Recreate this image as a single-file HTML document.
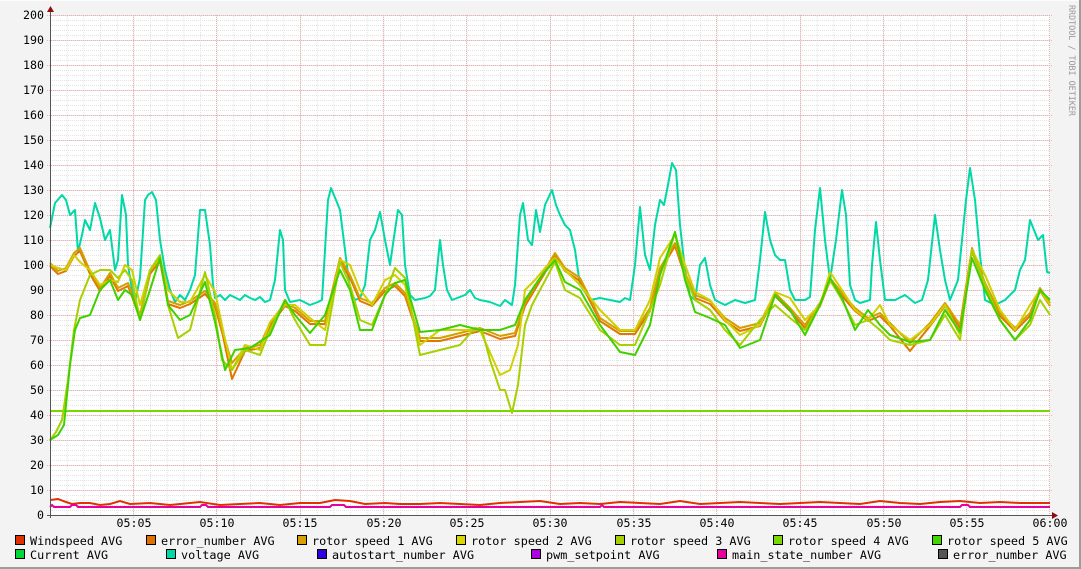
<!DOCTYPE html>
<html><head><meta charset="utf-8"><style>
html,body{margin:0;padding:0;background:#f3f3f3;}
svg{display:block;font-family:"DejaVu Sans Mono","Liberation Mono",monospace;}
</style></head><body>
<svg width="1081" height="569" viewBox="0 0 1081 569" xmlns="http://www.w3.org/2000/svg">
<defs>
<pattern id="mh" x="0" y="15" width="1000" height="5" patternUnits="userSpaceOnUse"><line x1="0" y1="0.5" x2="1000" y2="0.5" stroke="#e2e2e2" stroke-dasharray="1,1"/></pattern>
<pattern id="mv" x="50" y="0" width="16.6667" height="600" patternUnits="userSpaceOnUse"><line x1="0.5" y1="0" x2="0.5" y2="600" stroke="#e2e2e2" stroke-dasharray="1,1"/></pattern>
</defs>
<rect x="0" y="0" width="1081" height="569" fill="#f3f3f3"/>
<line x1="0" y1="0.5" x2="1081" y2="0.5" stroke="#fcfcfc"/>
<line x1="1080" y1="0" x2="1080" y2="569" stroke="#9c9c9c" stroke-width="2"/>
<line x1="0" y1="568" x2="1081" y2="568" stroke="#9c9c9c" stroke-width="2"/>
<rect x="50" y="15" width="1000" height="500" fill="#fff"/>
<rect x="50" y="15" width="1000" height="500" fill="url(#mh)"/>
<rect x="50" y="15" width="1000" height="500" fill="url(#mv)"/>
<g stroke="#eeb0b0" stroke-dasharray="1,1">
<line x1="47" y1="15.5" x2="1053" y2="15.5"/><line x1="47" y1="40.5" x2="1053" y2="40.5"/><line x1="47" y1="65.5" x2="1053" y2="65.5"/><line x1="47" y1="90.5" x2="1053" y2="90.5"/><line x1="47" y1="115.5" x2="1053" y2="115.5"/><line x1="47" y1="140.5" x2="1053" y2="140.5"/><line x1="47" y1="165.5" x2="1053" y2="165.5"/><line x1="47" y1="190.5" x2="1053" y2="190.5"/><line x1="47" y1="215.5" x2="1053" y2="215.5"/><line x1="47" y1="240.5" x2="1053" y2="240.5"/><line x1="47" y1="265.5" x2="1053" y2="265.5"/><line x1="47" y1="290.5" x2="1053" y2="290.5"/><line x1="47" y1="315.5" x2="1053" y2="315.5"/><line x1="47" y1="340.5" x2="1053" y2="340.5"/><line x1="47" y1="365.5" x2="1053" y2="365.5"/><line x1="47" y1="390.5" x2="1053" y2="390.5"/><line x1="47" y1="415.5" x2="1053" y2="415.5"/><line x1="47" y1="440.5" x2="1053" y2="440.5"/><line x1="47" y1="465.5" x2="1053" y2="465.5"/><line x1="47" y1="490.5" x2="1053" y2="490.5"/>
<line x1="133.5" y1="15" x2="133.5" y2="518"/><line x1="216.5" y1="15" x2="216.5" y2="518"/><line x1="300.5" y1="15" x2="300.5" y2="518"/><line x1="383.5" y1="15" x2="383.5" y2="518"/><line x1="466.5" y1="15" x2="466.5" y2="518"/><line x1="550.5" y1="15" x2="550.5" y2="518"/><line x1="633.5" y1="15" x2="633.5" y2="518"/><line x1="716.5" y1="15" x2="716.5" y2="518"/><line x1="800.5" y1="15" x2="800.5" y2="518"/><line x1="883.5" y1="15" x2="883.5" y2="518"/><line x1="966.5" y1="15" x2="966.5" y2="518"/><line x1="1049.5" y1="15" x2="1049.5" y2="518"/>
</g>
<g font-size="11.6" fill="#000" text-anchor="end">
<text x="44" y="19">200</text><text x="44" y="44">190</text><text x="44" y="69">180</text><text x="44" y="94">170</text><text x="44" y="119">160</text><text x="44" y="144">150</text><text x="44" y="169">140</text><text x="44" y="194">130</text><text x="44" y="219">120</text><text x="44" y="244">110</text><text x="44" y="269">100</text><text x="44" y="294">90</text><text x="44" y="319">80</text><text x="44" y="344">70</text><text x="44" y="369">60</text><text x="44" y="394">50</text><text x="44" y="419">40</text><text x="44" y="444">30</text><text x="44" y="469">20</text><text x="44" y="494">10</text><text x="44" y="519">0</text>
</g>
<g font-size="11.6" fill="#000" text-anchor="middle">
<text x="134" y="527">05:05</text><text x="217" y="527">05:10</text><text x="300" y="527">05:15</text><text x="384" y="527">05:20</text><text x="467" y="527">05:25</text><text x="550" y="527">05:30</text><text x="634" y="527">05:35</text><text x="717" y="527">05:40</text><text x="800" y="527">05:45</text><text x="884" y="527">05:50</text><text x="967" y="527">05:55</text><text x="1050" y="527">06:00</text>
</g>
<text transform="translate(1069,5) rotate(90)" font-size="8.4" fill="#999">RRDTOOL / TOBI OETIKER</text>

<line x1="50" y1="411" x2="1050" y2="411" stroke="#77d800" stroke-width="2"/>

<polyline fill="none" stroke="#00d8a8" stroke-width="2" stroke-linejoin="round" points="50,228 55,203 62,195 66,200 70,215 75,210 78,252 82,235 85,220 90,230 95,203 100,218 105,240 110,230 115,270 118,260 122,195 126,215 128,265 132,290 135,302 140,278 145,200 148,195 152,192 156,200 160,240 165,270 170,290 175,302 180,295 185,300 190,290 195,275 200,210 205,210 210,245 213,285 215,298 220,295 225,300 230,295 240,300 245,295 250,298 255,300 260,297 265,302 270,300 275,280 280,230 283,240 285,290 290,302 300,300 310,305 318,302 322,300 328,200 331,188 336,200 340,210 345,250 350,290 355,300 360,298 365,285 370,240 375,230 380,212 385,240 390,265 395,230 398,210 402,215 405,265 410,295 415,300 425,298 430,296 435,290 440,240 443,265 447,290 452,300 465,295 470,290 475,298 480,300 490,302 500,306 505,300 512,305 515,285 520,215 523,203 528,240 532,245 536,210 540,232 545,205 552,190 556,205 560,215 565,225 570,230 575,250 580,285 585,292 590,300 600,298 610,300 620,302 625,298 630,300 635,265 640,207 645,255 650,270 655,225 660,200 664,205 668,185 672,163 676,170 680,225 685,270 690,296 695,300 700,265 705,258 710,285 715,300 725,305 735,300 745,303 755,300 760,260 765,212 770,240 775,255 780,260 785,260 790,290 795,300 805,300 810,297 815,230 820,188 825,240 830,280 836,240 842,190 846,215 850,285 855,300 860,303 870,300 872,265 876,222 880,260 885,300 895,300 905,295 915,303 922,300 928,280 935,215 940,250 945,280 950,300 958,280 962,240 966,200 970,168 975,200 980,255 985,300 995,305 1005,300 1015,290 1020,270 1025,260 1030,220 1034,230 1038,240 1043,235 1047,272 1050,273"/>

<g fill="none" stroke-width="2" stroke-linejoin="round">
<polyline stroke="#e07800" transform="translate(0,6)" points="50,260 58,268 66,265 74,250 80,245 90,268 100,285 110,270 118,285 128,280 140,312 150,268 160,255 168,298 180,302 190,298 205,288 215,300 223,330 232,373 245,345 260,342 270,320 285,300 295,305 310,318 325,318 340,255 350,272 360,295 372,300 385,285 395,280 405,290 420,335 440,335 460,330 480,325 500,333 515,330 525,300 540,275 555,250 565,265 580,275 600,315 620,328 635,328 650,305 660,265 675,240 685,270 695,292 710,298 725,315 740,325 760,320 775,290 790,305 805,322 820,300 830,275 842,290 855,305 868,315 880,310 890,320 910,345 930,320 945,300 960,322 972,245 985,280 1000,310 1015,325 1030,310 1040,285 1050,300"/>
<polyline stroke="#d4a000" transform="translate(0,3)" points="50,260 58,268 66,265 74,250 80,245 90,268 100,285 110,270 118,285 128,280 140,312 150,268 160,255 168,298 180,302 190,298 205,288 215,300 223,330 232,360 245,345 260,342 270,320 285,300 295,305 310,318 325,318 340,255 350,272 360,295 372,300 385,285 395,280 405,290 420,335 440,335 460,330 480,325 500,333 515,330 525,300 540,275 555,250 565,265 580,275 600,315 620,328 635,328 650,305 660,265 675,240 685,270 695,292 710,298 725,315 740,325 760,320 775,290 790,305 805,322 820,300 830,275 842,290 855,305 868,315 880,310 890,320 910,340 930,320 945,300 960,322 972,245 985,280 1000,310 1015,325 1030,310 1040,285 1050,300"/>
<polyline stroke="#d0d000" points="50,265 58,268 66,270 74,255 80,262 90,270 100,285 110,280 118,282 125,265 132,270 140,305 150,270 160,258 168,290 180,302 190,302 205,275 215,292 223,330 232,370 245,345 260,350 270,322 285,305 295,305 310,318 325,330 340,260 350,265 360,290 372,305 385,280 395,275 405,285 420,345 440,330 460,330 480,330 500,375 510,370 518,345 525,290 535,280 545,268 555,258 565,270 580,285 600,310 620,330 635,330 650,300 660,258 675,235 685,265 695,292 710,300 725,320 740,335 760,325 775,292 790,298 805,320 820,305 830,272 842,290 855,310 868,320 880,305 890,325 910,340 930,325 945,305 960,335 972,250 985,275 1000,310 1015,330 1030,305 1040,290 1050,305"/>
<polyline stroke="#a8d000" points="50,440 56,432 62,420 68,380 74,330 80,300 90,275 100,270 110,270 118,278 125,270 132,280 140,320 150,270 160,255 168,305 178,338 190,330 205,272 215,315 222,360 232,370 245,350 260,355 270,330 285,300 295,320 310,345 325,345 340,262 350,285 360,320 372,325 385,295 395,268 405,278 420,355 440,350 460,345 475,328 482,330 490,360 500,390 505,390 512,413 518,385 525,325 532,305 540,290 555,262 565,290 580,298 600,330 620,345 635,345 650,310 660,285 675,232 685,275 695,300 710,310 725,330 740,345 760,320 775,305 790,318 805,330 820,305 830,280 842,300 855,325 868,320 880,330 890,340 910,345 930,340 945,315 960,340 972,250 985,285 1000,320 1015,340 1030,325 1040,300 1050,315"/>
<polyline stroke="#40d000" points="50,440 58,435 64,425 70,365 75,330 80,318 90,315 100,290 110,280 118,300 125,290 132,295 140,320 150,290 160,258 168,305 180,320 190,315 205,282 215,322 225,370 235,350 250,348 270,335 285,300 295,315 310,333 325,315 340,270 350,290 360,330 372,330 385,295 395,283 405,280 420,332 440,330 460,325 480,330 500,330 515,325 525,300 540,278 555,260 565,282 580,290 600,325 620,352 635,355 650,325 660,275 675,232 685,280 695,312 710,318 725,325 740,348 760,340 775,295 790,310 805,335 820,305 830,278 842,298 855,330 868,310 880,325 890,335 910,342 930,340 945,310 960,332 972,258 985,290 1000,320 1015,340 1030,320 1040,290 1050,300"/>
</g>

<polyline fill="none" stroke="#e03000" stroke-width="2" points="50,500 58,499 66,502 72,504 80,503 90,503 100,505 110,504 120,501 130,504 150,503 170,505 200,502 220,505 240,504 260,503 280,505 300,503 320,503 335,500 350,501 365,504 385,503 400,504 420,504 440,503 460,504 480,505 500,503 520,502 540,501 560,504 580,503 600,504 620,502 640,503 660,504 680,501 700,504 720,503 740,502 760,503 780,504 800,503 820,502 840,503 860,504 880,501 900,503 920,504 940,502 960,501 980,503 1000,502 1020,503 1050,503"/>
<polyline fill="none" stroke="#e600a0" stroke-width="2" points="50,507 52,505 54,507 70,507 72,505 76,505 78,507 200,507 202,505 206,505 208,507 330,507 332,505 344,505 346,507 600,507 602,505 604,507 960,507 962,505 968,505 970,507 1050,507"/>

<line x1="50.5" y1="10" x2="50.5" y2="518" stroke="#555" stroke-width="1"/>
<line x1="47" y1="515.5" x2="1053" y2="515.5" stroke="#555" stroke-width="1"/>
<polygon points="47,12 54,12 50.5,6" fill="#8a1010"/>
<polygon points="1052,512 1052,519 1058,515.5" fill="#8a1010"/>

<g font-size="11.8" fill="#000" stroke="none">
<rect x="15.5" y="535.5" width="9" height="9" fill="#e03000" stroke="#000"/><text x="30" y="545">Windspeed AVG</text>
<rect x="146.5" y="535.5" width="9" height="9" fill="#e07000" stroke="#000"/><text x="161" y="545">error_number AVG</text>
<rect x="297.5" y="535.5" width="9" height="9" fill="#d8a000" stroke="#000"/><text x="312" y="545">rotor speed 1 AVG</text>
<rect x="456.5" y="535.5" width="9" height="9" fill="#d8d800" stroke="#000"/><text x="471" y="545">rotor speed 2 AVG</text>
<rect x="615.5" y="535.5" width="9" height="9" fill="#a8d000" stroke="#000"/><text x="630" y="545">rotor speed 3 AVG</text>
<rect x="773.5" y="535.5" width="9" height="9" fill="#78d800" stroke="#000"/><text x="788" y="545">rotor speed 4 AVG</text>
<rect x="932.5" y="535.5" width="9" height="9" fill="#40d800" stroke="#000"/><text x="947" y="545">rotor speed 5 AVG</text>
<rect x="15.5" y="549.5" width="9" height="9" fill="#00d838" stroke="#000"/><text x="30" y="559">Current AVG</text>
<rect x="166.5" y="549.5" width="9" height="9" fill="#00d8a8" stroke="#000"/><text x="181" y="559">voltage AVG</text>
<rect x="317.5" y="549.5" width="9" height="9" fill="#3000e0" stroke="#000"/><text x="332" y="559">autostart_number AVG</text>
<rect x="531.5" y="549.5" width="9" height="9" fill="#b000e0" stroke="#000"/><text x="546" y="559">pwm_setpoint AVG</text>
<rect x="717.5" y="549.5" width="9" height="9" fill="#e600a0" stroke="#000"/><text x="732" y="559">main_state_number AVG</text>
<rect x="938.5" y="549.5" width="9" height="9" fill="#555" stroke="#000"/><text x="953" y="559">error_number AVG</text>
</g>
</svg>
</body></html>
